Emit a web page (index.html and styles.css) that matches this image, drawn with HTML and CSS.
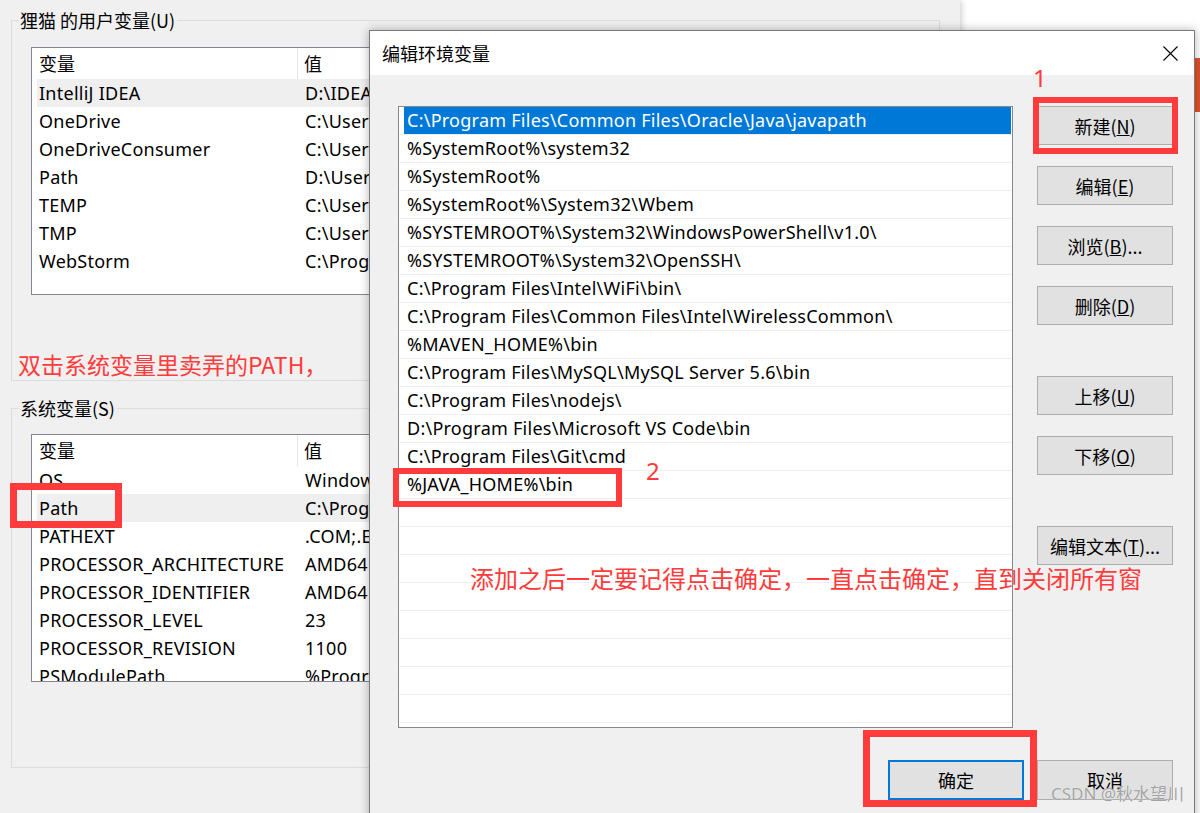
FILE: index.html
```html
<!DOCTYPE html>
<html lang="zh-CN">
<head>
<meta charset="utf-8">
<title>编辑环境变量</title>
<link rel="stylesheet" href="styles.css">
</head>
<body>
<div class="desk">
  <div class="sysprops">
    <fieldset class="group g-user">
      <legend class="cjk">狸猫 的用户变量(U)</legend>
      <div class="gbody gbody-user">
        <div class="lv">
          <div class="lv-head cjk"><span class="c1">变量</span><span class="c2">值</span></div>
          <div class="lv-row sel"><span class="c1">IntelliJ IDEA</span><span class="c2">D:\IDEA\bin</span></div>
          <div class="lv-row"><span class="c1">OneDrive</span><span class="c2">C:\Users\OneDrive</span></div>
          <div class="lv-row"><span class="c1">OneDriveConsumer</span><span class="c2">C:\Users\OneDrive</span></div>
          <div class="lv-row"><span class="c1">Path</span><span class="c2">D:\Users\AppData</span></div>
          <div class="lv-row"><span class="c1">TEMP</span><span class="c2">C:\Users\AppData</span></div>
          <div class="lv-row"><span class="c1">TMP</span><span class="c2">C:\Users\AppData</span></div>
          <div class="lv-row"><span class="c1">WebStorm</span><span class="c2">C:\Program Files</span></div>
        </div>
        <p class="note note-1">双击系统变量里卖弄的PATH，</p>
      </div>
    </fieldset>
    <fieldset class="group g-sys">
      <legend class="cjk">系统变量(S)</legend>
      <div class="gbody gbody-sys">
        <div class="lv">
          <div class="lv-head cjk"><span class="c1">变量</span><span class="c2">值</span></div>
          <div class="lv-row"><span class="c1">OS</span><span class="c2">Windows_NT</span></div>
          <div class="lv-row sel"><span class="c1">Path</span><span class="c2">C:\Program Files</span></div>
          <div class="lv-row"><span class="c1">PATHEXT</span><span class="c2">.COM;.EXE;.BAT</span></div>
          <div class="lv-row"><span class="c1">PROCESSOR_ARCHITECTURE</span><span class="c2">AMD64</span></div>
          <div class="lv-row"><span class="c1">PROCESSOR_IDENTIFIER</span><span class="c2">AMD64 Family</span></div>
          <div class="lv-row"><span class="c1">PROCESSOR_LEVEL</span><span class="c2">23</span></div>
          <div class="lv-row"><span class="c1">PROCESSOR_REVISION</span><span class="c2">1100</span></div>
          <div class="lv-row"><span class="c1">PSModulePath</span><span class="c2">%ProgramFiles%</span></div>
        </div>
      </div>
    </fieldset>
  </div>

  <div class="backwin"><div class="backwin-bar"></div></div>

  <div class="dialog">
    <div class="titlebar">
      <span class="title cjk">编辑环境变量</span>
      <svg class="close" viewBox="0 0 15 15" aria-label="关闭"><path d="M0.5 0.5L14.5 14.5M14.5 0.5L0.5 14.5" stroke="#000" stroke-width="1.1" fill="none"/></svg>
    </div>
    <div class="dbody">
      <div class="pathlist">
        <div class="pi sel"><span class="t">C:\Program Files\Common Files\Oracle\Java\javapath</span></div>
        <div class="pi"><span class="t">%SystemRoot%\system32</span></div>
        <div class="pi"><span class="t">%SystemRoot%</span></div>
        <div class="pi"><span class="t">%SystemRoot%\System32\Wbem</span></div>
        <div class="pi"><span class="t">%SYSTEMROOT%\System32\WindowsPowerShell\v1.0\</span></div>
        <div class="pi"><span class="t">%SYSTEMROOT%\System32\OpenSSH\</span></div>
        <div class="pi"><span class="t">C:\Program Files\Intel\WiFi\bin\</span></div>
        <div class="pi"><span class="t">C:\Program Files\Common Files\Intel\WirelessCommon\</span></div>
        <div class="pi"><span class="t">%MAVEN_HOME%\bin</span></div>
        <div class="pi"><span class="t">C:\Program Files\MySQL\MySQL Server 5.6\bin</span></div>
        <div class="pi"><span class="t">C:\Program Files\nodejs\</span></div>
        <div class="pi"><span class="t">D:\Program Files\Microsoft VS Code\bin</span></div>
        <div class="pi"><span class="t">C:\Program Files\Git\cmd</span></div>
        <div class="pi"><span class="t">%JAVA_HOME%\bin</span></div>
        <div class="pi"><span class="t"></span></div>
        <div class="pi"><span class="t"></span></div>
        <div class="pi"><span class="t"></span></div>
        <div class="pi"><span class="t"></span></div>
        <div class="pi"><span class="t"></span></div>
        <div class="pi"><span class="t"></span></div>
        <div class="pi"><span class="t"></span></div>
        <div class="pi"><span class="t"></span></div>
        <div class="pi"><span class="t"></span></div>
      </div>
      <div class="side">
        <button class="btn cjk">新建(<u>N</u>)</button>
        <button class="btn cjk">编辑(<u>E</u>)</button>
        <button class="btn cjk">浏览(<u>B</u>)...</button>
        <button class="btn cjk">删除(<u>D</u>)</button>
        <button class="btn cjk sep">上移(<u>U</u>)</button>
        <button class="btn cjk">下移(<u>O</u>)</button>
        <button class="btn cjk sep">编辑文本(<u>T</u>)...</button>
      </div>
      <div class="footer">
        <button class="btn cjk ok">确定</button>
        <button class="btn cjk">取消</button>
      </div>
    </div>
  </div>

  <div class="mark mark-path"></div>
  <div class="mark mark-java"></div>
  <div class="mark mark-new"></div>
  <div class="mark mark-ok"></div>
  <span class="num num-1">1</span>
  <span class="num num-2">2</span>
  <p class="note note-2">添加之后一定要记得点击确定，一直点击确定，直到关闭所有窗</p>
  <span class="watermark">CSDN @秋水望川</span>
</div>
</body>
</html>
```

FILE: styles.css
```css
* { box-sizing: border-box; }
html, body { margin: 0; padding: 0; }
body {
  width: 1200px;
  height: 813px;
  overflow: hidden;
  background: #ffffff;
  font-family: "Noto Sans", "Noto Sans CJK SC", sans-serif;
  font-size: 18px;
  color: #000;
}
.desk { position: relative; width: 1200px; height: 813px; overflow: hidden; }
.cjk { font-family: "Noto Sans CJK SC", "Noto Sans", sans-serif; font-size: 18px; }

/* background system properties window */
.sysprops {
  position: absolute;
  left: 0; top: 0;
  width: 960px; height: 813px;
  background: #f0f0f0;
  padding: 8px 0 0 11px;
  box-shadow: 1px 0 7px rgba(0, 0, 0, 0.22);
  z-index: 2;
}
.group {
  margin: 0;
  padding: 0;
  width: 929px;
  min-width: 0;
  border: 1px solid #dcdcdc;
}
.group legend {
  padding: 0 2px;
  margin-left: 6px;
  line-height: 24px;
  color: #000;
}
.g-sys { margin-top: 15px; }
.gbody-user { padding: 15px 0 1px 19px; }
.gbody-sys { padding: 14px 0 85px 19px; }

.lv {
  width: 341px;
  height: 248px;
  border: 1px solid #828790;
  border-right: 0;
  background: #fff;
  overflow: hidden;
}
.lv-head { display: flex; height: 31px; line-height: 31px; }
.lv-head .c1 { width: 266px; padding-left: 7px; border-right: 1px solid #e5e5e5; flex: none; }
.lv-head .c2 { padding-left: 6px; }
.lv-row { display: flex; height: 28px; line-height: 28px; margin-left: 5px; white-space: nowrap; letter-spacing: 0.25px; }
.lv-row .c1 { width: 261px; padding-left: 2px; flex: none; }
.lv-row .c2 { padding-left: 7px; }
.lv-row.sel { background: #efefef; }

.note { margin: 0; color: #ff3b3b; font-family: "Noto Sans CJK SC", sans-serif; white-space: nowrap; }
.note-1 { margin: 54px 0 0 -13px; font-size: 23px; line-height: 30px; }
.note-2 { position: absolute; left: 470px; top: 563px; font-size: 24px; line-height: 30px; z-index: 6; }

/* window behind, on the right */
.backwin { position: absolute; left: 1180px; top: 0; width: 20px; height: 813px; background: #fff; z-index: 1; }
.backwin-bar { margin-top: 58px; height: 54px; background: #e0522b; }

/* edit dialog */
.dialog {
  position: absolute;
  left: 369px; top: 30px;
  width: 826px; height: 800px;
  border: 1px solid #7a7a7a;
  background: #f0f0f0;
  box-shadow: 0 0 9px rgba(0, 0, 0, 0.3);
  z-index: 3;
}
.titlebar {
  height: 44px;
  background: #fff;
  display: flex;
  align-items: center;
  justify-content: space-between;
  padding: 0 16px 0 12px;
}
.close { width: 15px; height: 15px; display: block; }
.dbody {
  display: grid;
  grid-template-columns: 615px 136px;
  column-gap: 24px;
  padding: 31px 21px 0 28px;
}
.pathlist {
  height: 622px;
  border: 1px solid #828790;
  background: #fff;
  overflow: hidden;
}
.pi { height: 28px; border-bottom: 1px solid #efefef; padding: 0 1px 0 5px; white-space: nowrap; letter-spacing: 0.25px; }
.pi .t { display: block; height: 27px; line-height: 27px; padding-left: 3px; }
.pi.sel .t { background: #0078d7; color: #fff; }

.side { display: flex; flex-direction: column; }
.btn {
  width: 136px;
  height: 39px;
  margin: 0;
  padding: 0;
  background: #e1e1e1;
  border: 1px solid #adadad;
  color: #000;
  display: flex;
  align-items: center;
  justify-content: center;
}
.side .btn + .btn { margin-top: 21px; }
.side .btn.sep { margin-top: 51px; }
.footer {
  grid-column: 1 / -1;
  display: flex;
  justify-content: flex-end;
  gap: 13px;
  margin-top: 32px;
}
.footer .btn { height: 40px; }
.btn.ok { border: 2px solid #0078d7; }

/* red annotations */
.mark { position: absolute; border: 6px solid #ff3b3b; z-index: 5; }
.mark-path { left: 10px; top: 483px; width: 112px; height: 45px; border-width: 7px; }
.mark-java { left: 393px; top: 468px; width: 229px; height: 39px; }
.mark-new { left: 1033px; top: 97px; width: 145px; height: 57px; }
.mark-ok { left: 863px; top: 730px; width: 174px; height: 77px; border-width: 7px; }
.num { position: absolute; color: #ff3b3b; font-family: "Noto Sans", sans-serif; font-size: 24px; line-height: 24px; z-index: 6; }
.num-1 { left: 1033px; top: 66px; }
.num-2 { left: 646px; top: 459px; }

.watermark {
  position: absolute;
  left: 1051px; top: 784px;
  font-family: "Noto Sans", "Noto Sans CJK SC", sans-serif;
  font-size: 17px;
  line-height: 20px;
  color: #a3a3a3;
  text-shadow: 0 0 1px #fff;
  z-index: 7;
}
```
